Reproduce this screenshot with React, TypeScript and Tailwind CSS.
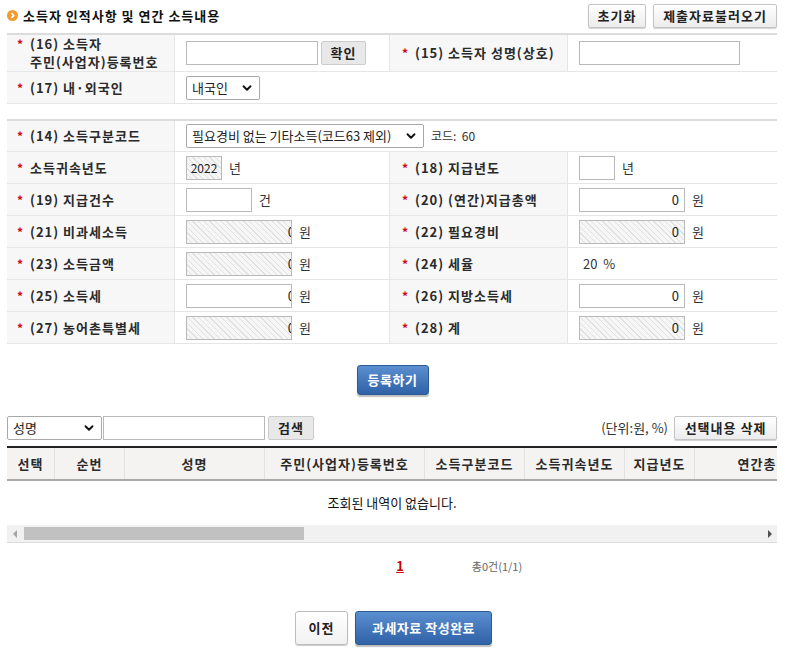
import { ChevronDown } from 'lucide-react';

const hatch =
  'bg-[repeating-linear-gradient(45deg,#f6f6f6_0px,#f6f6f6_3px,#e1e1e1_3px,#e1e1e1_4px)]';

function Label({ children, right }: { children: React.ReactNode; right?: boolean }) {
  return (
    <div
      className={`flex items-center bg-[#f7f7f7] border-r border-b border-[#e6e6e6] ${right ? 'pl-[12px]' : 'pl-[10px]'} text-[13px] font-bold tracking-[1px] text-[#2a2a2a] leading-[18px]`}
    >
      <div className="flex items-baseline">
        <span className="text-[#d0021b] text-[12px] w-[13px] shrink-0">*</span>
        <div>{children}</div>
      </div>
    </div>
  );
}

function Cell({
  children,
  className = '',
  gap = 'gap-[7px]',
  pad = 'pl-[11px]',
}: {
  children?: React.ReactNode;
  className?: string;
  gap?: string;
  pad?: string;
}) {
  return (
    <div className={`flex items-center ${gap} ${pad} border-b border-[#e6e6e6] text-[13px] text-[#333] ${className}`}>
      {children}
    </div>
  );
}

function Box({ w, value, readOnly, clip }: { w: string; value?: string; readOnly?: boolean; clip?: boolean }) {
  return (
    <div
      className={`h-[24px] border border-[#b9b9b9] flex items-center justify-end overflow-hidden text-[13px] text-[#222] ${w} ${readOnly ? hatch : 'bg-white'} ${clip ? 'pr-0' : 'pr-[5px]'}`}
    >
      {value !== undefined && <span className={clip ? 'mr-[-4px]' : ''}>{value}</span>}
    </div>
  );
}

function FakeSelect({ w, text }: { w: string; text: string }) {
  return (
    <div className={`h-[24px] border border-[#a9a9a9] rounded-[2px] bg-white flex items-center justify-between pl-[5px] pr-[5px] text-[13px] text-[#222] ${w}`}>
      <span className="whitespace-nowrap">{text}</span>
      <ChevronDown size={14} strokeWidth={3.2} className="text-[#111] shrink-0" />
    </div>
  );
}

function GrayButton({ children, w }: { children: React.ReactNode; w: string }) {
  return (
    <button className={`h-[24px] ${w} border border-[#c4c4c4] rounded-[2px] bg-gradient-to-b from-white to-[#ececec] shadow-[0_1px_1px_rgba(0,0,0,0.18)] text-[13px] font-bold tracking-[1px] text-[#222]`}>
      {children}
    </button>
  );
}

const columns: [string, number][] = [
  ['선택', 48],
  ['순번', 70],
  ['성명', 140],
  ['주민(사업자)등록번호', 160],
  ['소득구분코드', 100],
  ['소득귀속년도', 100],
  ['지급년도', 70],
  ['연간총지급액', 164],
  ['비과세소득', 110],
  ['필요경비', 110],
  ['소득금액', 110],
];

export default function App() {
  return (
    <div className="w-[787px] min-h-[650px] bg-white pl-[7px] pr-[10px] font-['Noto_Sans_CJK_KR','Noto_Sans',sans-serif] text-[#333]">
      {/* title */}
      <div className="flex items-center justify-between pt-[3px] h-[28px]">
        <div className="flex items-center gap-[5px]">
          <svg width="11" height="11" viewBox="0 0 12 12">
            <circle cx="6" cy="6" r="6" fill="#f29a2e" />
            <path d="M4.8 3.4 L7.3 6 L4.8 8.6" stroke="#fff" strokeWidth="1.9" fill="none" />
          </svg>
          <span className="text-[13px] font-bold tracking-[1px] text-[#111]">소득자 인적사항 및 연간 소득내용</span>
        </div>
        <div className="flex gap-[7px]">
          <GrayButton w="w-[58px]">초기화</GrayButton>
          <GrayButton w="w-[124px]">제출자료불러오기</GrayButton>
        </div>
      </div>

      {/* form part 1 */}
      <div className="mt-[5px] border-t-2 border-[#dcdcdc] grid grid-cols-[168px_215px_178px_209px] grid-rows-[37px_32px]">
        <Label>
          <div>(16) 소득자</div>
          <div>주민(사업자)등록번호</div>
        </Label>
        <Cell className="border-r border-r-[#e6e6e6]" gap="gap-[3px]">
          <Box w="w-[132px]" />
          <button className="h-[24px] w-[45px] border border-[#cccccc] rounded-[2px] bg-[#e8e8e8] text-[13px] font-bold tracking-[1px] text-[#222]">
            확인
          </button>
        </Cell>
        <Label right>(15) 소득자 성명(상호)</Label>
        <Cell>
          <Box w="w-[161px]" />
        </Cell>

        <Label>(17) 내·외국인</Label>
        <Cell className="col-span-3">
          <FakeSelect w="w-[74px]" text="내국인" />
        </Cell>
      </div>

      {/* form part 2 */}
      <div className="mt-[15px] border-t-2 border-[#dcdcdc] grid grid-cols-[168px_215px_178px_209px] grid-rows-[31px] auto-rows-[32px]">
        <Label>(14) 소득구분코드</Label>
        <Cell className="col-span-3">
          <FakeSelect w="w-[238px]" text="필요경비 없는 기타소득(코드63 제외)" />
          <span className="text-[12px] text-[#333]">코드:&nbsp;&nbsp;60</span>
        </Cell>

        <Label>소득귀속년도</Label>
        <Cell className="border-r border-r-[#e6e6e6]">
          <div className={`h-[24px] w-[36px] border border-[#b9b9b9] ${hatch} flex items-center justify-center text-[12px] text-[#222]`}>
            2022
          </div>
          <span>년</span>
        </Cell>
        <Label right>(18) 지급년도</Label>
        <Cell>
          <Box w="w-[36px]" />
          <span>년</span>
        </Cell>

        <Label>(19) 지급건수</Label>
        <Cell className="border-r border-r-[#e6e6e6]">
          <Box w="w-[66px]" />
          <span>건</span>
        </Cell>
        <Label right>(20) (연간)지급총액</Label>
        <Cell>
          <Box w="w-[106px]" value="0" />
          <span>원</span>
        </Cell>

        <Label>(21) 비과세소득</Label>
        <Cell className="border-r border-r-[#e6e6e6]">
          <Box w="w-[106px]" value="0" readOnly clip />
          <span>원</span>
        </Cell>
        <Label right>(22) 필요경비</Label>
        <Cell>
          <Box w="w-[106px]" value="0" readOnly />
          <span>원</span>
        </Cell>

        <Label>(23) 소득금액</Label>
        <Cell className="border-r border-r-[#e6e6e6]">
          <Box w="w-[106px]" value="0" readOnly clip />
          <span>원</span>
        </Cell>
        <Label right>(24) 세율</Label>
        <Cell pad="pl-[15px]">
          <span>20&nbsp;&nbsp;%</span>
        </Cell>

        <Label>(25) 소득세</Label>
        <Cell className="border-r border-r-[#e6e6e6]">
          <Box w="w-[106px]" value="0" clip />
          <span>원</span>
        </Cell>
        <Label right>(26) 지방소득세</Label>
        <Cell>
          <Box w="w-[106px]" value="0" />
          <span>원</span>
        </Cell>

        <Label>(27) 농어촌특별세</Label>
        <Cell className="border-r border-r-[#e6e6e6]">
          <Box w="w-[106px]" value="0" readOnly clip />
          <span>원</span>
        </Cell>
        <Label right>(28) 계</Label>
        <Cell>
          <Box w="w-[106px]" value="0" readOnly />
          <span>원</span>
        </Cell>
      </div>

      {/* register */}
      <div className="flex justify-center mt-[21px] pl-[1px]">
        <button className="h-[30px] w-[72px] rounded-[3px] border border-[#2c5a94] bg-gradient-to-b from-[#5a8fd0] to-[#2f62a6] shadow-[0_2px_1px_rgba(0,0,0,0.25)] text-[13px] font-bold tracking-[0.5px] text-white">
          등록하기
        </button>
      </div>

      {/* search */}
      <div className="flex items-center justify-between mt-[21px]">
        <div className="flex items-center">
          <FakeSelect w="w-[95px]" text="성명" />
          <div className="h-[24px] w-[162px] ml-[1px] border border-[#b9b9b9] bg-white" />
          <button className="h-[24px] w-[46px] ml-[3px] border border-[#cccccc] rounded-[2px] bg-[#e8e8e8] text-[13px] font-bold tracking-[1px] text-[#222]">
            검색
          </button>
        </div>
        <div className="flex items-center gap-[6px]">
          <span className="text-[13px] text-[#333]">(단위:원, %)</span>
          <GrayButton w="w-[103px]">선택내용 삭제</GrayButton>
        </div>
      </div>

      {/* list */}
      <div className="mt-[6px] overflow-hidden">
        <div className="flex w-max border-t-2 border-[#222] border-b-2 border-b-[#a9a9a9] bg-[#f4f3f1] h-[35px]">
          {columns.map(([name, w]) => (
            <div
              key={name}
              style={{ width: w }}
              className="shrink-0 flex items-center justify-center border-r border-[#e2e2e2] text-[13px] font-bold tracking-[1px] text-[#2a2a2a] whitespace-nowrap"
            >
              {name}
            </div>
          ))}
        </div>
        <div className="h-[44px] flex items-center justify-center text-[13px] text-[#111]">
          조회된 내역이 없습니다.
        </div>
        <div className="h-[18px] bg-[#f1f1f1] border-b border-[#dcdcdc] flex items-center">
          <span className="ml-[6px] w-0 h-0 border-y-[4px] border-y-transparent border-r-[4px] border-r-[#a6a6a6]" />
          <div className="ml-[7px] w-[280px] h-[13px] bg-[#c1c1c1]" />
          <div className="flex-1" />
          <span className="mr-[5px] w-0 h-0 border-y-[4px] border-y-transparent border-l-[4px] border-l-[#505050]" />
        </div>
      </div>

      {/* paging */}
      <div className="mt-[13px] grid grid-cols-[1fr_auto_1fr] items-center h-[18px]">
        <div />
        <a className="text-[13px] font-bold text-[#cc0000] underline ml-[16px]">1</a>
        <span className="pl-[68px] text-[11px] text-[#666]">총0건(1/1)</span>
      </div>

      {/* bottom buttons */}
      <div className="mt-[37px] flex justify-center gap-[7px] pl-[3px]">
        <button className="h-[34px] w-[53px] rounded-[3px] border border-[#bdbdbd] bg-gradient-to-b from-white to-[#f1f1f1] shadow-[0_1px_1px_rgba(0,0,0,0.2)] text-[13px] font-bold tracking-[1px] text-[#222]">
          이전
        </button>
        <button className="h-[34px] w-[137px] rounded-[3px] border border-[#2c5a94] bg-gradient-to-b from-[#5a8fd0] to-[#2f62a6] shadow-[0_2px_1px_rgba(0,0,0,0.25)] text-[13px] font-bold tracking-[0.5px] text-white">
          과세자료 작성완료
        </button>
      </div>
    </div>
  );
}
